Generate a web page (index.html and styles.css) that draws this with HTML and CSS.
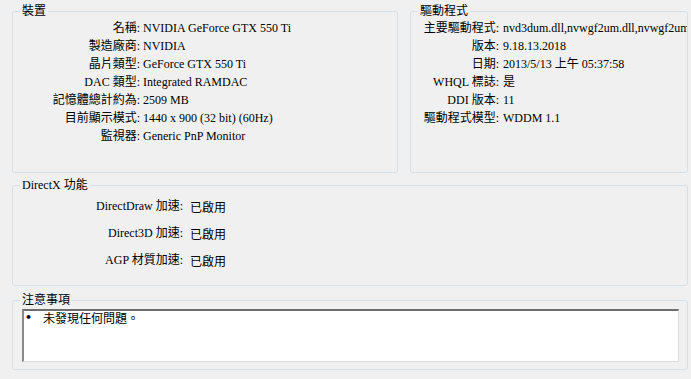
FILE: index.html
```html
<!DOCTYPE html>
<html lang="zh-Hant">
<head>
    <meta charset="UTF-8"/>
    <title>DirectX 診斷工具 - 顯示</title>
    <link rel="stylesheet" href="styles.css">
</head>
<body>
<div class="page">
    <div class="top-row">
        <fieldset class="group device">
            <legend>裝置</legend>
            <div class="info-grid">
                <span class="label">名稱:</span><span class="value">NVIDIA GeForce GTX 550 Ti</span>
                <span class="label">製造廠商:</span><span class="value">NVIDIA</span>
                <span class="label">晶片類型:</span><span class="value">GeForce GTX 550 Ti</span>
                <span class="label">DAC 類型:</span><span class="value">Integrated RAMDAC</span>
                <span class="label">記憶體總計約為:</span><span class="value">2509 MB</span>
                <span class="label">目前顯示模式:</span><span class="value">1440 x 900 (32 bit) (60Hz)</span>
                <span class="label">監視器:</span><span class="value">Generic PnP Monitor</span>
            </div>
        </fieldset>
        <fieldset class="group driver">
            <legend>驅動程式</legend>
            <div class="info-grid">
                <span class="label">主要驅動程式:</span><span class="value">nvd3dum.dll,nvwgf2um.dll,nvwgf2um.dll</span>
                <span class="label">版本:</span><span class="value">9.18.13.2018</span>
                <span class="label">日期:</span><span class="value">2013/5/13 上午 05:37:58</span>
                <span class="label">WHQL 標誌:</span><span class="value">是</span>
                <span class="label">DDI 版本:</span><span class="value">11</span>
                <span class="label">驅動程式模型:</span><span class="value">WDDM 1.1</span>
            </div>
        </fieldset>
    </div>

    <fieldset class="group directx">
        <legend>DirectX 功能</legend>
        <div class="feature-grid">
            <span class="label">DirectDraw 加速:</span><span class="value">已啟用</span>
            <span class="label">Direct3D 加速:</span><span class="value">已啟用</span>
            <span class="label">AGP 材質加速:</span><span class="value">已啟用</span>
        </div>
    </fieldset>

    <fieldset class="group notes">
        <legend>注意事項</legend>
        <div class="notes-box">
            <div class="note-item"><span class="bullet">•</span><span>未發現任何問題。</span></div>
        </div>
    </fieldset>
</div>
</body>
</html>
```

FILE: styles.css
```css
* {
    margin: 0;
    padding: 0;
    box-sizing: border-box;
}

html, body {
    width: 691px;
    height: 379px;
    overflow: hidden;
}

body {
    background-color: #f0f0f0;
    color: #000;
    font-family: "Liberation Serif", "Noto Sans CJK TC", serif;
    font-size: 12px;
}

.page {
    padding: 3px 3px 0 12px;
}

.top-row {
    display: flex;
    gap: 12px;
    height: 170px;
}

.group {
    border: 1px solid #d5dfe5;
    border-radius: 3px;
    min-width: 0;
}

.group legend {
    margin-left: 7px;
    padding: 0 2px;
    height: 16px;
    line-height: 16px;
    font-size: 12px;
}

.device {
    width: 386px;
}

.driver {
    flex: 1;
}

.info-grid {
    display: grid;
    grid-template-columns: 127px 1fr;
    column-gap: 3px;
    grid-auto-rows: 18px;
    line-height: 18px;
}

.driver .info-grid {
    grid-template-columns: 88px 1fr;
    column-gap: 4px;
}

.label {
    text-align: right;
    white-space: nowrap;
}

.value {
    white-space: nowrap;
    overflow: hidden;
}

.directx {
    margin-top: 4px;
    height: 109px;
}

.feature-grid {
    display: grid;
    grid-template-columns: 170px 1fr;
    column-gap: 7px;
    grid-auto-rows: 27px;
    line-height: 27px;
}

.feature-grid .value {
    font-family: "Noto Sans CJK TC", sans-serif;
}

.notes {
    margin-top: 6px;
    height: 78px;
}

.notes-box {
    height: 53px;
    margin: 1px 8px 0 9px;
    background-color: #fff;
    border-top: 2px solid #6e6e6e;
    border-left: 2px solid #8a8a8a;
    border-right: 1px solid #dcdcdc;
    border-bottom: 1px solid #dcdcdc;
    font-family: "Noto Sans CJK TC", sans-serif;
}

.note-item {
    display: flex;
    line-height: 14px;
}

.bullet {
    width: 19px;
    padding-left: 1px;
    font-family: "DejaVu Sans", sans-serif;
    font-size: 11px;
    font-weight: bold;
}
```
